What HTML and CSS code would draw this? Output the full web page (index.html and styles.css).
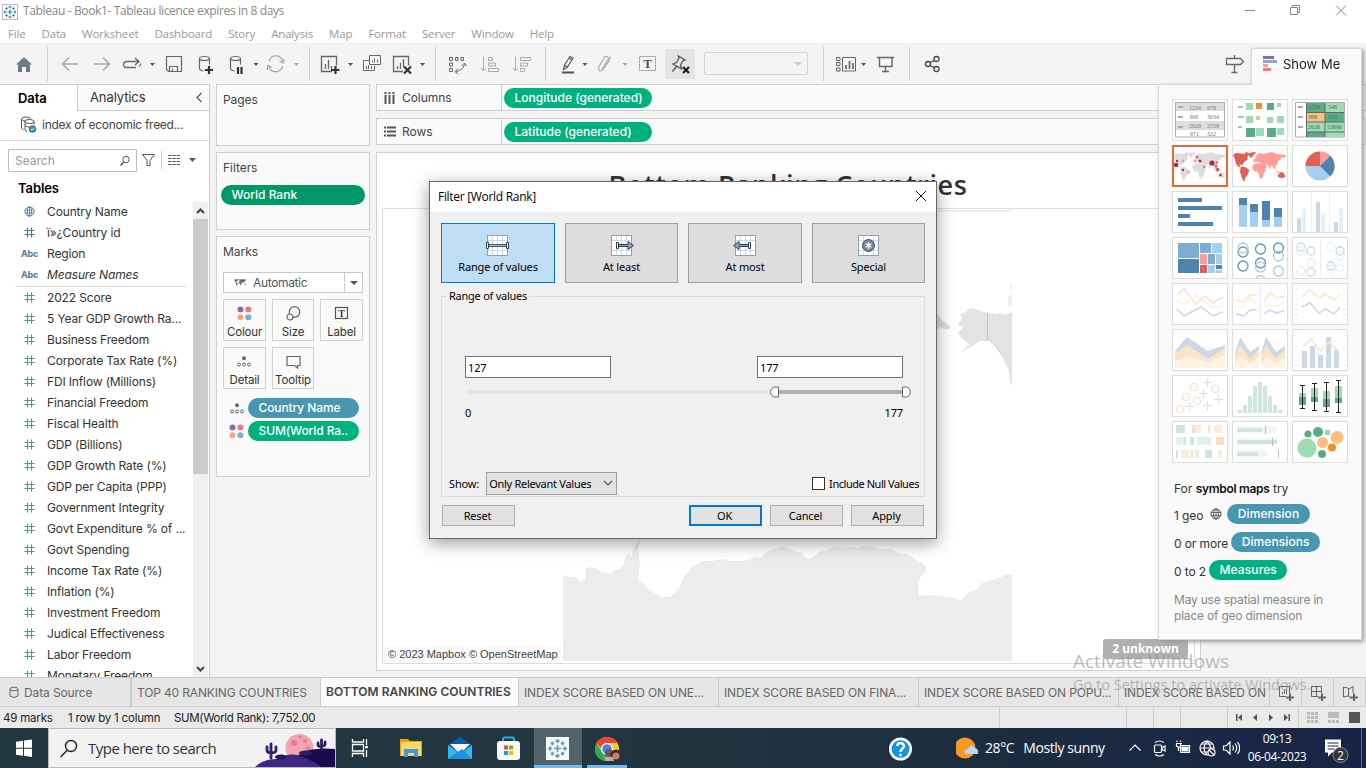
FILE: index.html
```html
<!DOCTYPE html>
<html lang="en">
<head>
<meta charset="utf-8">
<title>Tableau - Book1</title>
<link rel="stylesheet" href="styles.css">
</head>
<body>
<svg class="defs" width="0" height="0">
  <symbol id="hash" viewBox="0 0 11 11"><path d="M3.5 .5v10M7.500 .5v10M.5 3.500h10M.5 7.500h10" fill="none" stroke="currentColor" stroke-width="1.100"/></symbol>
  <symbol id="globe" viewBox="0 0 12 12"><g fill="none" stroke="currentColor"><circle cx="6" cy="6" r="5"/><ellipse cx="6" cy="6" rx="2.300" ry="5"/><path d="M1 4.500h10M1 7.500h10M6 1v10" stroke-width=".8"/></g></symbol>
  <symbol id="dots4" viewBox="0 0 15 15"><circle cx="3.500" cy="3.500" r="3" fill="#8a7099"/><circle cx="11.300" cy="3.500" r="3" fill="#fa7183"/><circle cx="3.500" cy="11.300" r="3" fill="#f3a97c"/><circle cx="11.300" cy="11.300" r="3" fill="#85a9d0"/></symbol>
  <symbol id="detail" viewBox="0 0 14 11"><circle cx="7" cy="2.200" r="2" fill="#666"/><g fill="none" stroke="#666"><circle cx="2" cy="8.500" r="1.500"/><circle cx="7" cy="8.500" r="1.500"/><circle cx="12" cy="8.500" r="1.500"/></g></symbol>
  <symbol id="tab" viewBox="0 0 16 16"><g stroke="currentColor" stroke-width="1.300"><path d="M8 5v6M5 8h6M8 0v3.500M6.200 1.800h3.600M8 12.500V16M6.200 14.200h3.600M0 8h3.500M1.800 6.200v3.600M12.500 8H16M14.200 6.200v3.600M3.700 2.200v3M2.200 3.700h3M12.300 2.200v3M10.800 3.700h3M3.700 10.800v3M2.200 12.300h3M12.300 10.800v3M10.800 12.300h3"/></g></symbol>
  <symbol id="world" viewBox="0 0 56 42"><g fill="currentColor"><path d="M1 10 4 8 12 9 14 7 18 9 15 12 16 14 12 17 10 20 7 19 9 22 7 22 4 19 3 14zM17 8 24 7 21 11 18 13zM9 22 13 22 17 25 16 29 13 33 12 37 10 33 8 26zM21 17 22 14 25 13 23 12 27 8 31 9 36 8 40 7 44 9 54 10 53 13 50 12 48 15 46 16 45 20 43 21 44 25 41 22 39 20 38 25 36 20 33 19 35 21 33 24 30 19 27 17zM22 19 27 18 31 20 34 25 32 28 31 32 28 34 26 27 22 26 20 22zM46 30 49 27 52 28 53 32 50 33 46 32zM43 25 49 28 46 28z"/></g></symbol>
</svg>

<header class="titlebar">
  <svg class="app-icon" width="16" height="16"><rect x=".5" y=".5" width="15" height="15" fill="#fff" stroke="#bbb"/><use href="#tab" x="1.500" y="1.500" width="13" height="13" color="#2b7fa8"/></svg>
  <span class="app-title">Tableau - Book1- Tableau licence expires in 8 days</span>
  <svg width="136" height="23" viewBox="1230 0 136 23" fill="none" stroke="#888"><path d="M1245 10.500h10M1290.500 7.500h7v7h-7zM1292.500 7v-1.500h7v7h-1.500M1336 5.500l10 10M1346 5.500l-10 10"/></svg>
</header>
<nav class="menubar"><span>File</span><span>Data</span><span>Worksheet</span><span>Dashboard</span><span>Story</span><span>Analysis</span><span>Map</span><span>Format</span><span>Server</span><span>Window</span><span>Help</span></nav>

<div class="toolbar">
  <svg width="310" height="41" viewBox="0 43 310 41" fill="none" stroke="#666">
    <path d="M16 64.500 24 57l8 7.500h-2V72h-4v-5h-4v5h-4v-7.500z" fill="#6c7a89" stroke="none"/>
    <path d="M47.500 47v34M309.500 47v34" stroke="#ccc"/>
    <path d="M78 64H63M69 57.500 62.500 64l6.500 6.500M94 64h15M103 57.500l6.500 6.500-6.500 6.500" stroke="#aaa" stroke-width="1.600"/>
    <path d="M136 67.500h-9q-3.500 0-3.500-3t3.500-3h11M135 58l4 3.500-4 3.500M139 66.500q2-1 1.500-3" stroke-width="1.300"/>
    <path d="M150 63h5l-2.500 3zM253.500 63h5l-2.500 3z" fill="#555" stroke="none"/><path d="M294 63h5l-2.500 3z" fill="#aaa" stroke="none"/>
    <path d="M166.500 56.500h15v15h-13l-2-2zM169.500 71v-4.500h8V71M172.500 68.500v3" stroke-width="1.200"/>
    <g stroke-width="1.200"><ellipse cx="204.500" cy="58.500" rx="5" ry="2"/><path d="M199.500 58.500v10.500q1.500 2 4 2M209.500 58.500v6"/><ellipse cx="235.500" cy="58.500" rx="5" ry="2"/><path d="M230.500 58.500v10.500q1.500 2 4 2M240.500 58.500v6"/></g>
    <path d="M205 70h8M209 66v8M238 67v7M241.500 67v7" stroke="#333" stroke-width="2.200"/>
    <path d="M269 61a7 7 0 0 1 13.500 0M282.500 66a7 7 0 0 1-13.500 1M284 59l-1 4-3.500-2M267 70l1-4.500 4 2" stroke="#aaa" stroke-width="1.300"/>
  </svg>
  <svg width="236" height="41" viewBox="310 43 236 41" fill="none" stroke="#666">
    <path d="M332 71.500h-10.500v-15h15v9M325.500 69v-5M328.500 69v-9M331.500 69v-3" stroke-width="1.300"/><path d="M331 70h8.500M335.500 66v8" stroke="#333" stroke-width="2.200"/>
    <path d="M348 63h5l-2.500 3zM420 63h5l-2.500 3z" fill="#555" stroke="none"/>
    <path d="M369.500 55.500h11v9h-11zM369 60.500h-5.500v10h11V66M366.500 69v-3M368.500 69v-4M371.500 69v-3M372.500 62.500v-2M374.500 62.500v-4M377.500 62.500v-3"/>
    <path d="M403 71.500h-9.500v-15h15v9M397.500 69v-3M400.500 69v-6M403.500 67v-8" stroke-width="1.300"/><path d="M404 66.500l7 7M411 66.500l-7 7" stroke="#333" stroke-width="2.200"/>
    <path d="M435.500 47v34M545.500 47v34" stroke="#ccc"/>
    <path d="M449.500 57.500h3v3h-3zM455.500 57.500h2.500v3h-2.500zM461 57.500h2.500v3H461zM449.500 63h3v3h-3zM449.500 68.500h3v3h-3zM456 71.500q7-1 8.500-7M458 68.500l-3 3 3 2.500M461.500 66l3-3 2 3"/>
    <g stroke="#aaa"><path d="M483.500 57v13M481 68l2.500 3 2.500-3M488.500 57.500h4v3h-4zM488.500 63h7v3h-7zM488.500 68.500h10v3h-10zM515.500 57v13M513 68l2.500 3 2.500-3M520.500 57.500h10v3h-10zM520.500 63h7v3h-7zM520.500 68.500h4v3h-4z"/></g>
  </svg>
  <svg width="158" height="41" viewBox="546 43 158 41" fill="none" stroke="#555">
    <path d="M562 72.500h12" stroke-width="2"/><path d="M563.500 69.500l1-4.500 5.500-8.500 3 1.500-5.500 9zM564.500 65l3 2M569 58l3 2" stroke-width="1.100"/>
    <path d="M582.500 63h5l-2.500 3z" fill="#555" stroke="none"/><path d="M622.500 63h5l-2.500 3z" fill="#aaa" stroke="none"/>
    <path d="M602 69l6-9q1-3-1-3.500-2-.5-3 1.500l-5 8.500q-1 4 1.500 4.500 2 0 3-2l5-7.500q2-3 1.500-5" stroke="#aaa" stroke-width="1.200"/>
    <rect x="639.500" y="56.500" width="16" height="14" stroke="#888" stroke-dasharray="2 1"/><text class="tool-t" x="647.500" y="68" text-anchor="middle" fill="#555" stroke="none">T</text>
    <rect x="665" y="49" width="30" height="30" fill="#e4e4e4" stroke="none"/>
    <path d="M678.500 56l6.500 4-2 .5-2.500 4.500 1 4-8.500-5 3.500-1.500 2.500-4.500zM676.500 66.500l-4 5" stroke-width="1.300"/><path d="M683 67l6 6M689 67l-6 6" stroke="#222" stroke-width="2.300"/>
  </svg>
  <div class="fit-select"><span></span></div>
  <svg width="437" height="41" viewBox="809 43 437 41" fill="none" stroke="#666">
    <path d="M823.500 47v34M909.500 47v34" stroke="#ccc"/>
    <path d="M836.500 57.500h3.500v3h-3.500zM836.500 62.500h3.500v3h-3.500zM836.500 68h3.500v3h-3.500zM842.500 57.500h13v13.500h-13z"/><path d="M846 69v-4M849.500 69v-8M853 69v-6" stroke-width="1.700"/>
    <path d="M861 63h5l-2.500 3z" fill="#555" stroke="none"/><path d="M877 57.500h17M879.500 58v8.500h12.500V58M885.500 66v5.500M882 71.500h7" stroke-width="1.400"/>
    <g stroke="#444" stroke-width="1.300"><circle cx="928" cy="64" r="2.500"/><circle cx="936.500" cy="59" r="2.500"/><circle cx="936.500" cy="69" r="2.500"/><path d="M930 62.700l4.500-2.500M930 65.500l4.500 2.500"/></g>
    <path d="M1226.500 58.500h14l3 3-3 3h-14zM1234.500 55v3M1234.500 65v7M1231.500 72.500h6" stroke-width="1.300"/>
  </svg>
</div>

<main class="workspace">
  <aside class="data-pane">
    <div class="pane-tabs"><div class="pane-tab active">Data</div><div class="pane-tab">Analytics<svg width="8" height="11" fill="none" stroke="#555" stroke-width="1.200"><path d="M6.500 1 2 5.500 6.500 10"/></svg></div></div>
    <div class="source-row">
      <svg width="18" height="18" fill="none" stroke="#555"><path d="M1.500 3v9l2 2M1.500 3q0-2 4.500-2t4.500 2M1.500 3q1 2 3.500 2"/><ellipse cx="9.500" cy="5.500" rx="4.500" ry="2"/><path d="M5 5.500V14l2 2M14 5.500v3M5 9.500q2 2 5 1.500"/><circle cx="12.500" cy="13" r="3.800" fill="#3a86a8" stroke="none"/><path d="M10.800 13l1.300 1.300 2.300-2.500" stroke="#fff"/></svg>
      <span>index of economic freed...</span>
    </div>
    <div class="search-row">
      <div class="search-box"><span>Search</span><svg width="12" height="12" fill="none" stroke="#555"><circle cx="7" cy="4.500" r="3.200"/><path d="M4.800 7 1.500 10.500" stroke-width="1.500"/></svg></div>
      <svg width="60" height="24" viewBox="140 148 60 24" fill="none" stroke="#555"><path d="M142.500 154.500h12l-4.500 6v5h-3v-5z"/><path d="M161.500 151v18" stroke="#ccc"/><path d="M168 155.500h12M168 158.500h12M168 161.500h12M168 164.500h12" stroke-dasharray="3.400 .9"/><path d="M189 158h7l-3.500 4z" fill="#555" stroke="none"/></svg>
    </div>
    <div class="tables-title">Tables</div>
    <div class="field-area">
      <div class="fields">
        <div class="field dim"><svg width="12" height="12"><use href="#globe"/></svg>Country Name</div>
        <div class="field dim"><svg width="11" height="11"><use href="#hash"/></svg>ï»¿Country id</div>
        <div class="field dim"><b>Abc</b>Region</div>
        <div class="field dim"><b>Abc</b><i>Measure Names</i></div>
        <hr>
        <div class="field"><svg width="11" height="11"><use href="#hash"/></svg>2022 Score</div>
        <div class="field"><svg width="11" height="11"><use href="#hash"/></svg>5 Year GDP Growth Ra...</div>
        <div class="field"><svg width="11" height="11"><use href="#hash"/></svg>Business Freedom</div>
        <div class="field"><svg width="11" height="11"><use href="#hash"/></svg>Corporate Tax Rate (%)</div>
        <div class="field"><svg width="11" height="11"><use href="#hash"/></svg>FDI Inflow (Millions)</div>
        <div class="field"><svg width="11" height="11"><use href="#hash"/></svg>Financial Freedom</div>
        <div class="field"><svg width="11" height="11"><use href="#hash"/></svg>Fiscal Health</div>
        <div class="field"><svg width="11" height="11"><use href="#hash"/></svg>GDP (Billions)</div>
        <div class="field"><svg width="11" height="11"><use href="#hash"/></svg>GDP Growth Rate (%)</div>
        <div class="field"><svg width="11" height="11"><use href="#hash"/></svg>GDP per Capita (PPP)</div>
        <div class="field"><svg width="11" height="11"><use href="#hash"/></svg>Government Integrity</div>
        <div class="field"><svg width="11" height="11"><use href="#hash"/></svg>Govt Expenditure % of ...</div>
        <div class="field"><svg width="11" height="11"><use href="#hash"/></svg>Govt Spending</div>
        <div class="field"><svg width="11" height="11"><use href="#hash"/></svg>Income Tax Rate (%)</div>
        <div class="field"><svg width="11" height="11"><use href="#hash"/></svg>Inflation (%)</div>
        <div class="field"><svg width="11" height="11"><use href="#hash"/></svg>Investment Freedom</div>
        <div class="field"><svg width="11" height="11"><use href="#hash"/></svg>Judical Effectiveness</div>
        <div class="field"><svg width="11" height="11"><use href="#hash"/></svg>Labor Freedom</div>
        <div class="field"><svg width="11" height="11"><use href="#hash"/></svg>Monetary Freedom</div>
      </div>
      <div class="scroll">
        <svg width="15" height="17" fill="none" stroke="#444" stroke-width="2"><path d="M4 11l3.500-3.500L11 11"/></svg>
        <div class="scroll-thumb"></div>
        <svg class="scroll-down" width="15" height="17" fill="none" stroke="#444" stroke-width="2"><path d="M4 7l3.500 3.500L11 7"/></svg>
      </div>
    </div>
  </aside>

  <section class="cards">
    <div class="card pages"><h3>Pages</h3></div>
    <div class="card filters"><h3>Filters</h3><div class="pill dark">World Rank</div></div>
    <div class="card marks"><h3>Marks</h3>
      <div class="mark-type"><svg width="13" height="10" viewBox="0 6 36 28" color="#666"><use href="#world" width="36" height="36" /></svg><span>Automatic</span><em></em></div>
      <div class="mark-grid">
        <div><svg width="15" height="15"><use href="#dots4"/></svg>Colour</div>
        <div><svg width="15" height="15" fill="none" stroke="#666" stroke-width="1.200"><circle cx="8.500" cy="6" r="5.300"/><circle cx="4" cy="11" r="3" fill="#fafafa"/></svg>Size</div>
        <div><svg width="15" height="15" fill="none" stroke="#555"><rect x="1.500" y="1.500" width="12" height="11" stroke-width="1.200"/><text class="tool-t small" x="7.500" y="10.500" text-anchor="middle" fill="#444" stroke="none">T</text></svg>Label</div>
        <div><svg width="15" height="15"><use href="#detail" width="14" height="11" y="2"/></svg>Detail</div>
        <div><svg width="15" height="15" fill="none" stroke="#666" stroke-width="1.200"><path d="M1 2.500h13v9h-2.500V14l-3-2.500H1z"/></svg>Tooltip</div>
      </div>
      <div class="mark-row"><svg width="16" height="15"><use href="#detail" width="14" height="11" x="1" y="2"/></svg><div class="pill blue">Country Name</div></div>
      <div class="mark-row"><svg width="16" height="15"><use href="#dots4" width="15" height="15"/></svg><div class="pill">SUM(World Ra..</div></div>
    </div>
  </section>

  <section class="sheet">
    <div class="shelf"><div class="shelf-name"><svg width="12" height="12"><path d="M1.500 0v2M5.500 0v2M9.500 0v2M1.500 3v9M5.500 3v9M9.500 3v9" stroke="#555" stroke-width="2"/></svg>Columns</div><div class="pill">Longitude (generated)</div></div>
    <div class="shelf"><div class="shelf-name"><svg width="12" height="12"><path d="M0 1.500h2M0 5.500h2M0 9.500h2M3 1.500h9M3 5.500h9M3 9.500h9" stroke="#555" stroke-width="1.800"/></svg>Rows</div><div class="pill">Latitude (generated)</div></div>
    <div class="view">
      <h1>Bottom Ranking Countries</h1>
      <div class="map">
        <svg width="811" height="454" viewBox="383 209 811 454">
          <path d="M563 575 571 577 576 577 580 582 583 580 585 581 586 569 590 567 597 568 600 571 604 573 611 574 614 570 621 568 624 565 625 558 629 553 631 558 633 550 635 546 638 542 641 540 638 547 640 563 638 580 644 584 649 590 655 593 661 597 670 597 675 593 679 588 682 582 684 577 688 573 689 569 694 566 703 561 712 561 723 559 730 561 741 561 748 560 755 557 760 558 765 553 770 550 778 548 781 546 788 548 794 551 800 552 805 557 809 559 814 556 820 551 827 551 834 546 841 548 850 547 858 548 862 546 872 547 882 549 892 549 898 553 907 554 915 559 920 562 926 566 926 571 921 576 918 585 919 596 931 595 947 597 954 598 960 601 966 596 969 592 977 590 982 583 991 580 999 578 1005 575 1012 574 1012 661 563 661z" fill="#ececec"/>
          <path d="M1012 312 1005 315 1000 313 996 314 988 313 981 311 976 309 970 308 966 312 960 314 962 319 958 325 963 327 958 333 961 337 966 342 970 344 961 352 971 347 980 341 988 341 995 344 999 350 1004 361 1009 370 1010 382 1012 386z" fill="#e3e3e3"/><path d="M987.500 313v28M991 341l5 5 5 8" fill="none" stroke="#c4c4c4"/><path d="M1012 282l-2 5 2 4zM1008 298l4-6v15l-4-2z" fill="#eee"/>
          <path d="M936 313l7 8 8 6-4 3-7-3-4 4z" fill="#ddd"/><path d="M1012 210H563v1.500h449z" fill="#ececec"/>
        </svg>
        <span class="credit">© 2023 Mapbox © OpenStreetMap</span>
        <span class="unknown">2 unknown</span>
      </div>
    </div>
  </section>
</main>

<div class="sheet-tabs">
  <div class="src"><svg width="10" height="13" fill="none" stroke="#666"><ellipse cx="5" cy="3" rx="4" ry="1.800"/><path d="M1 3v7q4 3 8 0V3"/></svg>Data Source</div>
  <div class="t40">TOP 40 RANKING COUNTRIES</div>
  <div class="current">BOTTOM RANKING COUNTRIES</div>
  <div class="idx">INDEX SCORE BASED ON UNE...</div>
  <div class="idx">INDEX SCORE BASED ON FINA...</div>
  <div class="idx">INDEX SCORE BASED ON POPU...</div>
  <div class="idx last">INDEX SCORE BASED ON</div>
  <div class="add"><svg width="16" height="16" fill="none" stroke="#666"><path d="M8 11.500H1.500v-10h10v7M4.500 9V7M6.500 9V5M8.500 9V4"/><path d="M8 12.500h8M12 8.500v8" stroke-width="2"/></svg></div>
  <div class="add"><svg width="16" height="16" fill="none" stroke="#666"><path d="M8 11.500H1.500v-10h10v7M1 6.500h11M6.500 1v10"/><path d="M8 12.500h8M12 8.500v8" stroke-width="2"/></svg></div>
  <div class="add"><svg width="16" height="16" fill="none" stroke="#666"><path d="M8 12l-2-1-4.500 1V2l4 1 1.500 1 4-2.500V8M6.500 3.500V11"/><path d="M8 12.500h8M12 8.500v8" stroke-width="2"/></svg></div>
</div>

<footer class="status">
  <span class="s1">49 marks</span><span class="s2">1 row by 1 column</span><span class="s3">SUM(World Rank): 7,752.00</span>
  <svg width="367" height="20" viewBox="999 708 367 20"><path d="M999.500 708v20M1126.500 708v20M1153.500 708v20M1180.500 708v20M1227.500 708v20M1298.500 708v20" stroke="#ccc"/><g fill="#555"><path d="M1236 714h1.500v7h-1.500zM1242 714v7l-4-3.500zM1257 714v7l-4-3.500zM1269 714v7l4-3.500zM1284 714v7l4-3.500zM1288.500 714h1.500v7h-1.500z"/><path d="M1349 712h11v11h-11z"/></g><g fill="none" stroke="#bbb"><path d="M1307 713.500h11M1307 717.500h11M1307 721.500h11" stroke-width="3" stroke-dasharray="3 1"/><path d="M1328 715h11" stroke-width="6"/><path d="M1328 721.500h11" stroke-width="3" stroke-dasharray="3 1"/></g></svg>
</footer>

<div class="taskbar">
  <svg width="48" height="40"><path d="M16 13.700l7-1v7h-7zM24 12.500l8-1v8.200h-8zM16 20.700h7v7l-7-1zM24 20.700h8V29l-8-1.200z" fill="#fff"/></svg>
  <div class="win-search">
    <svg width="39" height="38" fill="none" stroke="#222" stroke-width="1.400"><circle cx="22" cy="17" r="5.500"/><path d="M18 21.500 11.500 28"/></svg>
    <span>Type here to search</span>
    <svg class="scene" width="80" height="38" viewBox="256 729 80 38"><circle cx="300.500" cy="748" r="14" fill="#f3a3b2"/><g fill="#dc7f91"><circle cx="295" cy="743" r="3"/><circle cx="306" cy="741" r="2"/><circle cx="309" cy="749" r="2.500"/><circle cx="301" cy="737" r="1.500"/></g><path d="M294 760q12-14 42-11v18h-42z" fill="#1a0a4c"/><path d="M256 767q8-8 22-8 10-6 20-4 14 4 24 12z" fill="#3d2782"/><g stroke="#332064" stroke-width="2.800" fill="none" stroke-linecap="round"><path d="M272 744v14M268 747v3q0 3 4 3M277 747v3q0 3-5 3M322.500 740v9M319 743v2q0 1.500 3.500 1.500M326 742v2.500q0 1.500-3.500 1.500" /></g><ellipse cx="282" cy="757" rx="6" ry="2.500" fill="#2b1766"/><ellipse cx="307" cy="753" rx="7" ry="2.500" fill="#2b1766"/></svg>
  </div>
  <svg class="apps" width="620" height="40" viewBox="336 728 620 40">
    <g fill="none" stroke="#fff" stroke-width="1.300"><path d="M352.500 739v3h11v-3M352.500 757v-3.500h11v3.500M352.500 744.500h11v6.500h-11zM366.500 739v6M366.500 750v7"/></g><circle cx="366.500" cy="747" r="1.500" fill="#fff"/>
    <path d="M400 739h8l2 2h12v15h-22z" fill="#e6a413"/><path d="M401 742h20v14h-20z" fill="#ffd766"/><path d="M404 757v-8h14v8h-4v-4h-6v4z" fill="#3b9ae3"/>
    <path d="M448 745l12-8 12 8v14h-24z" fill="#0c5ba9"/><path d="M450 744h20l-10 10z" fill="#f5f8ff"/><path d="M448 745l12 9 12-9v14h-24z" fill="#35b7f2"/><path d="M448 759l14-10 10 10z" fill="#1e90df"/>
    <path d="M503 742v-3q0-1.500 2-1.500h7q2 0 2 1.500v3" fill="none" stroke="#24b0e6" stroke-width="2"/><rect x="497" y="741" width="23" height="19" rx="3" fill="#f8f8f8"/><path d="M504 745.500h4v4h-4z" fill="#f25022"/><path d="M509 745.500h4v4h-4z" fill="#7fba00"/><path d="M504 751h4v4h-4z" fill="#00a4ef"/><path d="M509 751h4v4h-4z" fill="#ffb900"/>
    <path d="M534 728h48v40h-48z" fill="#52646a"/><path d="M534 765h48v3h-48zM587 765h40v3h-40z" fill="#76b9ed"/><rect x="546" y="737" width="23" height="23" fill="#f7f7f7"/><use href="#tab" x="548" y="739" width="19" height="19" color="#5c9ac0"/>
    <circle cx="607" cy="749" r="12" fill="#fcc934"/><path d="M596.600 743A12 12 0 0 1 617.400 743L607 743A6 6 0 0 0 601 748z" fill="#ea4335"/><path d="M596.600 743A12 12 0 0 0 607 761L611 753 602 752z" fill="#34a853"/><circle cx="607" cy="749" r="6" fill="#fff"/><circle cx="607" cy="749" r="4.800" fill="#4285f4"/><circle cx="609" cy="753" r="4" fill="#76524c"/><circle cx="616" cy="755" r="5.500" fill="#382b2a"/><circle cx="616" cy="756" r="3.500" fill="#b98468"/><path d="M604 757h9l1 4h-8z" fill="#c8a7ae"/>
    <circle cx="900.500" cy="749" r="11.500" fill="#fff"/><circle cx="900.500" cy="749" r="9" fill="#1593db"/><path d="M897 746q.5-3 3.500-3t3.500 3q0 2-2 3-1.500 1-1.500 3" fill="none" stroke="#fff" stroke-width="2.400"/><circle cx="900.500" cy="755" r="1.500" fill="#fff"/>
  </svg>
  <div class="weather"><svg width="24" height="40"><circle cx="9" cy="20" r="10.500" fill="#f59b22"/><path d="M9 26q-2-5 3-5 3-6 7-1 4 1 3 6z" fill="#b8d4fa"/></svg><span class="temp">28°C</span><span class="sun">Mostly sunny</span></div>
  <svg width="116" height="40" viewBox="1124 728 116 40" fill="none" stroke="#fff" stroke-width="1.200"><path d="M1129.500 750.500l5.500-5.500 5.500 5.500M1155 742.500q4.500-3 9 0M1155 754.500q4.500 3 9 0"/><rect x="1154.500" y="745" width="7" height="7.500" rx="1"/><path d="M1162 747.500l3-1.500v5l-3-1.500zM1180.500 745.500h9v7h-9zM1176 743.500h6M1177 742v-1.500M1180.500 742v-1.500M1176.500 744v2q2.500 2.500 4 0v-2M1178.500 747v4"/><path d="M1182 747h6v4h-6z" fill="#fff"/><circle cx="1207" cy="748" r="7"/><path d="M1200 748h14M1201.500 744h11M1201.500 752h8M1207 741q-6 7 0 14M1207 741q5 6 3 10"/><circle cx="1211.500" cy="752.500" r="3.500" fill="#1b2944"/><path d="M1209 750l5 5M1223.500 746h2.500l4-4v12l-4-4h-2.500zM1232.500 745.500q2 2.500 0 5M1235 743.500q3.500 4.500 0 9M1237.500 742q4.500 6 0 12"/></svg>
  <div class="clock"><span>09:13</span><span>06-04-2023</span></div>
  <svg width="54" height="40" viewBox="1312 728 54 40"><path d="M1325 739.500h16v13h-9l-4 4v-4h-3z" fill="#fff"/><path d="M1327.500 743h11M1327.500 746h11M1327.500 749h7" stroke="#1b2944"/><circle cx="1340.500" cy="755" r="7.500" fill="#32373f" stroke="#888"/><text class="badge" x="1340.500" y="759.500" text-anchor="middle" fill="#fff">2</text><path d="M1361.500 728v40" stroke="#66708a"/></svg>
</div>

<aside class="showme">
  <div class="showme-tab"><svg width="15" height="16"><path d="M0 0h11v3H0z" fill="#8a7099"/><path d="M0 4h14v3H0z" fill="#85a9d0"/><path d="M0 8h5v3H0z" fill="#f3a97c"/><path d="M0 12h8v3H0z" fill="#fa7183"/></svg>Show Me</div>
  <div class="showme-body">
    <div class="thumbs">
      <svg viewBox="0 0 56 42"><path d="M3 3h50v35H3z" fill="#fff"/><path d="M3 3h50v9H3zM3 22h50v9H3z" fill="#ddd"/><path d="M3.500 3.500h49v34.500h-49z" fill="none" stroke="#aaa"/><path d="M6 8h5M6 18h5M6 28h5" stroke="#aaa" stroke-width="2"/><g class="tiny" fill="#777"><text x="17" y="10.500">1234</text><text x="35" y="10.500">678</text><text x="17" y="20">368</text><text x="35" y="20">3034</text><text x="17" y="29">2620</text><text x="35" y="29">2559</text><text x="18" y="37">971</text><text x="35" y="37">322</text></g></svg>
      <svg viewBox="0 0 56 42"><path d="M6 8h5M6 18h6M6 28h4" stroke="#bbb" stroke-width="2"/><path d="M14 4h7v7h-7zM14 17h7v7h-7zM35 18h6v6h-6zM45 17h7v7h-7zM24 29h8v8h-8zM45 29h7v7h-7zM45 4h4v4h-4z" fill="#9edab4"/><path d="M35 4h7v7h-7zM14 29h9v9h-9zM35 29h9v9h-9z" fill="#58ac88"/><path d="M24 4h6v6h-6z" fill="#f28e2b"/><path d="M24 17h4v4h-4z" fill="#ffbe7d"/></svg>
      <svg viewBox="0 0 56 42"><path d="M3.500 3.500h49v34.500h-49z" fill="#fff" stroke="#aaa"/><path d="M14 4h38v34H14z" fill="#9edab4"/><path d="M14 4h19v9H14zM33 13h19v10H33zM14 33h19v5H14z" fill="#58ac88"/><path d="M14 13h19v10H14z" fill="#ffbe7d"/><path d="M14.500 4v34M33 4v34M14 13.500h38M14 23h38M14 33h38" stroke="#666"/><path d="M6 8h5M6 18h5M6 28h5" stroke="#aaa" stroke-width="2"/><g class="tiny" fill="#486c59"><text x="16" y="10">1234</text><text x="36" y="10">546</text><text x="16" y="20">368</text><text x="36" y="20">310</text><text x="16" y="30">2620</text><text x="35" y="30">53890</text></g></svg>
      <svg class="selected" viewBox="0 0 56 42" color="#ddd"><use href="#world"/><g fill="#b8233f"><circle cx="4" cy="20" r="2.200"/><circle cx="5" cy="16" r="1.200"/><circle cx="11" cy="25" r="1.200"/><circle cx="28" cy="16" r="1.500"/><circle cx="40" cy="18" r="2.600"/><circle cx="48.500" cy="30" r="1.200"/></g><g fill="#e15f55"><circle cx="25" cy="12" r="1.500"/><circle cx="32" cy="22" r="1"/><circle cx="44" cy="21" r="1.500"/><circle cx="45.500" cy="24.500" r="2"/><circle cx="45" cy="17.500" r="1.200"/></g><g fill="#ff9d9a"><circle cx="11" cy="16" r="1.500"/><circle cx="23" cy="16" r="1.500"/><circle cx="16.500" cy="27" r="1.600"/></g></svg>
      <svg viewBox="0 0 56 42" color="#ff9d9a"><use href="#world"/><path d="M1 10 4 8 12 9 14 7 18 9 15 12 16 14 12 17 10 20 7 19 9 22 7 22 4 19 3 14zM17 8 24 7 21 11 18 13zM9 22 13 22 17 25 16 29 13 33 12 37 10 33 8 26zM46 30 49 27 52 28 53 32 50 33 46 32z" fill="#e15f55"/></svg>
      <svg viewBox="0 0 56 42"><circle cx="28" cy="21" r="14.500" fill="#a5cff0"/><path d="M28 21V6.500A14.500 14.500 0 0 0 13.500 21z" fill="#e15f55"/><path d="M28 21V6.500A14.500 14.500 0 0 1 38.300 10.700z" fill="#ff9d9a"/><path d="M28 21 38.300 10.700A14.500 14.500 0 0 1 38.300 31.300z" fill="#4f82ac"/></svg>
      <svg viewBox="0 0 56 42"><path d="M6 7h24v4H6zM6 15h44v4H6zM6 23h12v4H6zM6 31h35v4H6z" fill="#4f82ac"/></svg>
      <svg viewBox="0 0 56 42"><path d="M7 7h8v29H7zM18 13h8v23h-8zM30 10h8v26h-8zM42 17h8v19h-8z" fill="#a5cff0"/><path d="M7 7h8v7H7zM18 13h8v8h-8zM30 10h8v19h-8zM42 17h8v9h-8z" fill="#4f82ac"/></svg>
      <svg viewBox="0 0 56 42"><path d="M19.500 1v40M37.500 1v40" stroke="#eee"/><path d="M5 27h4v14H5zM24 11h4v30h-4zM42 31h4v10h-4z" fill="#cbd9e6"/><path d="M10 18h4v23h-4zM29 22h4v19h-4zM47 17h4v24h-4z" fill="#e2f0fb"/></svg>
      <svg viewBox="0 0 56 42"><path d="M6 6h21v15H6zM28 6h11v10H28zM36 17h7v10h-7z" fill="#7eadd3"/><path d="M40 6h10v10H40zM44 17h6v10h-6zM36 28h7v8h-7zM44 33h6v3h-6z" fill="#a5cff0"/><path d="M6 22h21v14H6zM44 28h6v4h-6z" fill="#4f82ac"/><path d="M28 17h7v10h-7z" fill="#ff9d9a"/><path d="M28 28h7v8h-7z" fill="#e15f55"/></svg>
      <svg viewBox="0 0 56 42" fill="none" stroke-width="1.300"><g stroke="#5f96be"><circle cx="11" cy="15" r="5"/><circle cx="11" cy="29" r="5"/><circle cx="28.500" cy="12" r="5"/><circle cx="28.500" cy="26" r="5"/><circle cx="46.500" cy="11" r="5"/></g><g stroke="#a5cff0"><circle cx="11" cy="11" r="5"/><circle cx="28.500" cy="30" r="5"/><path d="M24 41q4-5 9 0"/><circle cx="46.500" cy="19" r="5"/><circle cx="46.500" cy="34" r="5"/></g></svg>
      <svg viewBox="0 0 56 42" fill="none" stroke-width="1.300"><path d="M28.500 1v40" stroke="#eee"/><g stroke="#cbd9e6"><circle cx="9" cy="10" r="4"/><circle cx="19" cy="14" r="4"/><circle cx="19" cy="35" r="4"/><circle cx="48" cy="14" r="4"/><circle cx="39" cy="29" r="4"/></g><g stroke="#e2f0fb"><circle cx="9" cy="14" r="4"/><circle cx="9" cy="34" r="4"/><circle cx="19" cy="26" r="4"/><circle cx="39" cy="10" r="4"/><circle cx="48" cy="19" r="4"/><circle cx="48" cy="31" r="4"/><circle cx="39" cy="32" r="4"/></g></svg>
      <svg viewBox="0 0 56 42" fill="none" stroke-width="1.500"><path d="M5 12l7-6 12 15 9-8 8 7 10-6" stroke="#fde3c8"/><path d="M5 18l7 3 12-9 17 13 10-2" stroke="#fff1d8"/><path d="M5 26l7 7 17-9 12 9 10-4" stroke="#cbd9e6"/></svg>
      <svg viewBox="0 0 56 42" fill="none" stroke-width="1.500"><path d="M28.500 1v40" stroke="#eee"/><path d="M4 17l8 2 6-7h7M32 18l6-8 6 5 8-2" stroke="#fde3c8"/><path d="M4 24l7-1 7-8 7 5M32 24l6-2 6 2 8-5" stroke="#fff1d8"/><path d="M4 31l8 2 6-6h7M32 31l6-4 6 3 8-2" stroke="#cbd9e6"/></svg>
      <svg viewBox="0 0 56 42" fill="none" stroke-width="1.500"><path d="M4 6v33M52.500 6v33" stroke="#eee" stroke-width="3" stroke-dasharray="1 4"/><path d="M10 14l8-7 9 8 6-4 9 6 6-5" stroke="#fde3c8"/><path d="M10 24l8-4 9 10 6-4 9 5 6-7" stroke="#cbd9e6"/></svg>
      <svg viewBox="0 0 56 42"><path d="M3 22 15 8l21 14 17-6v23H3z" fill="#cbd9e6"/><path d="M3 24l12-8 21 14 17-11v20H3z" fill="#fde3c8"/><path d="M3 33l12-6 21 6 17-7v13H3z" fill="#fff3e5"/></svg>
      <svg viewBox="0 0 56 42"><path d="M3 24l5-16 10 15 9-6v22H3zM29 24l5-16 10 15 9-6v22H29z" fill="#cbd9e6"/><path d="M3 26l5-10 10 14 9-10v19H3zM29 26l5-10 10 14 9-10v19H29z" fill="#fde3c8"/><path d="M3 34l5-6 10 6 9-6v11H3zM29 34l5-6 10 6 9-6v11H29z" fill="#fff3e5"/></svg>
      <svg viewBox="0 0 56 42"><path d="M4 6v33M52.500 6v33" stroke="#eee" stroke-width="3" stroke-dasharray="1 4"/><path d="M10 22h5v17h-5zM18 17h5v22h-5zM26 26h5v13h-5zM34 8h5v31h-5zM42 21h5v18h-5z" fill="#cbd9e6"/><path d="M11 18l8-8 9 12 9-9 9 9" fill="none" stroke="#fde3c8" stroke-width="1.500"/></svg>
      <svg viewBox="0 0 56 42" fill="none"><g stroke="#fde3c8" stroke-width="1.400"><circle cx="22" cy="12" r="3.600"/><circle cx="43" cy="14" r="3.600"/><circle cx="14" cy="22" r="3.600"/><circle cx="25" cy="26" r="3.600"/><circle cx="8" cy="34" r="3.600"/></g><path d="M31 7.500h9M35.500 3v9M27 18.500h9M31.500 14v9M42 24.500h9M46.500 20v9M31 30.500h9M35.500 26v9M13 31.500h9M17.500 27v9" stroke="#cde7da"/></svg>
      <svg viewBox="0 0 56 42"><path d="M6 35h4v3H6zM11 30h4v8h-4zM16 21h4v17h-4zM21 11h4v27h-4zM26 7h4v31h-4zM31 11h4v27h-4zM36 21h4v17h-4zM41 30h4v8h-4zM46 35h4v3h-4z" fill="#cde7da"/></svg>
      <svg viewBox="0 0 56 42"><path d="M7 18h7v4H7zM19 13h7v9h-7zM31 16h7v8h-7zM43 11h7v12h-7z" fill="#9edab4"/><path d="M7 22h7v8H7zM19 22h7v5h-7zM31 24h7v8h-7zM43 23h7v5h-7z" fill="#58ac88"/><path d="M10.500 10v24M8 10.500h5M8 33.500h5M22.500 8v28M20 8.500h5M20 35.500h5M34.500 7v30M32 7.500h5M32 36.500h5M46.500 5v33M44 5.500h5M44 37.500h5" stroke="#222" fill="none"/></svg>
      <svg viewBox="0 0 56 42"><path d="M4 4h9v8H4zM11 16h3v8h-3zM18 16h4v8h-4zM4 29h2v8H4zM33 29h7v8h-7z" fill="#cde7da"/><path d="M4 16h6v8H4zM25 16h14v8H25zM23 29h4v8h-4z" fill="#e1f3e8"/><path d="M20 4h4v8h-4zM36 4h2v8h-2zM44 16h8v8h-8zM19 29h2v8h-2z" fill="#fbdfc5"/><path d="M25 4h4v8h-4zM42 4h8v8h-8zM9 29h8v8H9zM46 29h4v8h-4z" fill="#fdebdb"/></svg>
      <svg viewBox="0 0 56 42"><path d="M5 5h40v7H5zM5 17h40v7H5zM5 29h30v7H5z" fill="#f5f5f5"/><path d="M5 7h25v4H5zM5 19h40v4H5zM5 31h21v4H5z" fill="#cde7da"/><path d="M33.500 5v8M40.500 17v8M46.500 29v8" stroke="#bbb"/></svg>
      <svg viewBox="0 0 56 42"><circle cx="15" cy="27" r="9.500" fill="#9edab4"/><circle cx="16" cy="13" r="3.600" fill="#58ac88"/><circle cx="26" cy="11" r="5" fill="#58ac88"/><circle cx="35.500" cy="11.500" r="3" fill="#9edab4"/><circle cx="45" cy="16.500" r="6.500" fill="#ffbe7d"/><circle cx="30.500" cy="21.500" r="5.500" fill="#ffbe7d"/><circle cx="40" cy="26.500" r="4" fill="#f28e2b"/><circle cx="30" cy="33" r="4" fill="#58ac88"/></svg>
    </div>
    <div class="hint">For <b>symbol maps</b> try</div>
    <div class="need"><span class="geo">1 geo</span><svg width="12" height="12" color="#555"><use href="#globe"/></svg><div class="pill blue">Dimension</div></div>
    <div class="need"><span>0 or more</span><div class="pill blue">Dimensions</div></div>
    <div class="need"><span>0 to 2</span><div class="pill">Measures</div></div>
    <p>May use spatial measure in<br>place of geo dimension</p>
  </div>
</aside>

<section class="dialog">
  <header>Filter [World Rank]<svg width="12" height="12" fill="none" stroke="#111"><path d="M1 1l10 10M11 1 1 11"/></svg></header>
  <div class="modes">
    <div class="mode on"><svg width="24" height="22"><g fill="none"><rect x="1.500" y=".5" width="20" height="20" fill="#fff" stroke="#8ea0b8"/><path d="M6.500 1v19M11.500 1v19M16.500 1v19M2 5.500h19M2 15.500h19" stroke="#cfd8e6"/><path d="M2 10.500h20" stroke="#3f5876" stroke-width="3"/><path d="M2 10.500h20" stroke="#9bbde0"/><path d="M.5 7.500h2v6h-2zM20.500 7.500h2v6h-2z" fill="#fff" stroke="#2b4058"/></g></svg>Range of values</div>
    <div class="mode"><svg width="24" height="22"><rect x="1.500" y=".5" width="20" height="20" fill="#fff" stroke="#8ea0b8"/><path d="M6.500 1v19M11.500 1v19M16.500 1v19M2 5.500h19M2 15.500h19" stroke="#cfd8e6"/><path d="M8 9.500h10v-3l5.500 4-5.500 4v-3H8z" fill="#85a7cc" stroke="#2b4058"/><path d="M6.500 7.500h2v6h-2z" fill="#fff" stroke="#2b4058"/></svg>At least</div>
    <div class="mode"><svg width="24" height="22"><rect x="2.500" y=".5" width="20" height="20" fill="#fff" stroke="#8ea0b8"/><path d="M7.500 1v19M12.500 1v19M17.500 1v19M3 5.500h19M3 15.500h19" stroke="#cfd8e6"/><path d="M16 9.500H6v-3L.5 10.500l5.500 4v-3h10z" fill="#85a7cc" stroke="#2b4058"/><path d="M15.500 7.500h2v6h-2z" fill="#fff" stroke="#2b4058"/></svg>At most</div>
    <div class="mode"><svg width="24" height="22"><rect x="1.500" y=".5" width="20" height="20" fill="#fff" stroke="#8ea0b8"/><path d="M6.500 1v19M16.500 1v19M2 5.500h19M2 15.500h19" stroke="#cfd8e6"/><circle cx="11.500" cy="10.500" r="6" fill="#73879f" stroke="#3d526b"/><path d="M11.500 7v7M8.500 8.700l6 3.600M14.500 8.700l-6 3.600" stroke="#fff" stroke-width="1.300"/></svg>Special</div>
  </div>
  <fieldset class="range">
    <legend>Range of values</legend>
    <div class="inputs"><div class="input">127</div><div class="input">177</div></div>
    <svg class="slider" width="448" height="12" viewBox="465 386 448 12"><path d="M466 390h310v4H466z" fill="#e5e5e5"/><path d="M778 390h126v4H778z" fill="#b0b0b0"/><path d="M778.500 387v10h-3.500q-4.500-1-4.500-5t4.500-5zM902.500 387v10h4q4-1 4-5t-4-5z" fill="#fff" stroke="#666"/></svg>
    <div class="limits"><span>0</span><span>177</span></div>
    <div class="show-row"><span>Show:</span><div class="combo">Only Relevant Values<svg width="10" height="7" fill="none" stroke="#555" stroke-width="1.200"><path d="M1 1l4 4 4-4"/></svg></div><div class="check"></div><span class="nulls">Include Null Values</span></div>
  </fieldset>
  <div class="buttons"><div class="btn reset">Reset</div><div class="btn ok">OK</div><div class="btn">Cancel</div><div class="btn">Apply</div></div>
</section>

<div class="activate"><div>Activate Windows</div><p>Go to Settings to activate Windows.</p></div>
</body>
</html>
```
FILE: styles.css
```css
* { box-sizing: border-box; }
body { margin: 0; width: 1366px; height: 768px; overflow: hidden; position: relative; display: flex; flex-direction: column; background: #f4f4f4; font: 12px/16px Inter, sans-serif; color: #333; white-space: nowrap; }
svg { display: block; flex: none; }
h1, h3, p { margin: 0; font-weight: normal; }
.defs { position: absolute; }
.titlebar { height: 23px; background: #fff; display: flex; align-items: center; font: 12px/16px "Open Sans", sans-serif; color: #888; }
.app-icon { margin: 0 4px 0 2px; }
.app-title { flex: 1; letter-spacing: -.36px; padding: 0 0 1px 1px; }
.menubar { height: 20px; background: #fff; padding: 3px 0 0 8px; display: flex; gap: 16px; font: 11.500px/16px "Open Sans", sans-serif; color: #999; letter-spacing: -.17px; }
.toolbar { height: 41px; display: flex; align-items: center; box-shadow: inset 0 1px #eee; }
.fit-select { width: 104px; height: 23px; margin-right: 1px; border: 1px solid #d4d4d4; border-radius: 2px; display: flex; align-items: center; justify-content: flex-end; padding-right: 5px; }
.fit-select span { border: 4px solid transparent; border-top-color: #ccc; border-bottom: 0; }
.tool-t { font: bold 13px "Liberation Serif", serif; }
.tool-t.small { font-size: 10px; }
.workspace { height: 593px; display: flex; }

.data-pane { width: 210px; background: #fff; border-right: 1px solid #ccc; border-top: 1px solid #ccc; display: flex; flex-direction: column; }
.pane-tabs { height: 26px; display: flex; font-size: 13px; line-height: 25px; }
.pane-tab { flex: 1; display: flex; justify-content: space-between; align-items: center; padding: 0 6px 0 12px; background: #fafafa; border: solid #ccc; border-width: 0 0 1px 1px; color: #333; letter-spacing: -.1px; }
.pane-tab.active { flex: none; width: 77px; background: #fff; border: 0; font-weight: 600; color: #000; padding-left: 18px; }
.source-row { height: 30px; display: flex; align-items: center; gap: 4px; padding-left: 20px; padding-bottom: 1px; border-bottom: 1px solid #ddd; letter-spacing: -.28px; color: #444; }
.search-row { display: flex; padding: 7px 0 0 8px; height: 34px; gap: 3px; }
.search-box { width: 129px; height: 23px; margin-top: 1px; border: 1px solid #bbb; border-radius: 1px; padding: 0 5px 0 6px; display: flex; align-items: center; justify-content: space-between; color: #999; }
.tables-title { font-weight: 600; font-size: 13px; padding: 5px 0 0 18px; height: 27px; color: #000; letter-spacing: -.1px; }
.field-area { flex: 1; display: flex; min-height: 0; overflow: hidden; }
.fields { width: 193px; margin-top: -1px; }
.field { height: 21px; display: flex; align-items: center; padding-left: 47px; color: #333; letter-spacing: -.14px; }
.field svg { width: 11px; height: 11px; margin: 0 12px 0 -23px; color: #3fa57c; }
.field.dim svg, .field b { color: #3b7f9f; }
.field b { font-size: 9px; margin: 0 5px 0 -26px; width: 21px; letter-spacing: -.2px; }
.fields hr { margin: 1px 7px 0 15px; border: 0; border-top: 1px solid #ddd; }
.scroll { width: 15px; background: #f0f0f0; display: flex; flex-direction: column; }
.scroll-thumb { height: 255px; background: #cbcbcb; }
.scroll-down { margin-top: auto; }

.cards { width: 154px; margin-left: 6px; display: flex; flex-direction: column; gap: 6px; }
.card { border: 1px solid #d0d0d0; background: #fafafa; padding: 7px 6px; }
.card h3 { font-size: 12px; line-height: 16px; color: #444; letter-spacing: -.05px; }
.pages { height: 62px; }
.filters { height: 78px; padding-left: 4px; padding-right: 4px; }
.filters h3 { padding-left: 2px; }
.marks { height: 241px; }
.pill { height: 20px; border-radius: 10px; background: #00b180; color: #fff; font-weight: 500; line-height: 19px; padding: 0 10.500px; letter-spacing: 0; }
.pill.blue { background: #4996b2; }
.pill.dark { background: #00976a; margin-top: 9px; }
.mark-type { height: 21px; margin-top: 12px; width: 140px; border: 1px solid #c8c8c8; background: #fff; display: flex; align-items: center; padding-left: 10px; gap: 6px; color: #555; letter-spacing: -.35px; }
.mark-type em { margin-left: auto; width: 18px; height: 19px; border-left: 1px solid #ccc; display: flex; align-items: center; justify-content: center; }
.mark-type em::after { content: ""; border: 4px solid transparent; border-top-color: #555; border-bottom: 0; }
.mark-grid { display: grid; grid-template-columns: 43px 42px 43px; gap: 6px; margin: 6px 0 9px; }
.mark-grid div { height: 42px; border: 1px solid #d0d0d0; display: flex; flex-direction: column; align-items: center; padding-top: 6px; gap: 3px; font-size: 11.500px; letter-spacing: -.15px; }
.mark-row { display: flex; align-items: center; gap: 3px; padding-left: 6px; height: 20px; margin-bottom: 3px; }
.mark-row .pill { width: 111px; letter-spacing: -.1px; }

.sheet { flex: 1; margin-left: 6px; display: flex; flex-direction: column; gap: 7px; }
.shelf { height: 27px; border: 1px solid #d0d0d0; background: #fafafa; display: flex; align-items: center; gap: 2px; }
.shelf-name { width: 125px; height: 25px; padding-left: 7px; border-right: 1px solid #ccc; display: flex; align-items: center; gap: 6px; color: #444; letter-spacing: -.05px; }
.shelf .pill { width: 148px; }
.view { width: 825px; height: 519px; background: #fff; border: 1px solid #d0d0d0; padding-left: 5px; display: flex; flex-direction: column; }
.view h1 { height: 55px; padding-top: 15px; width: 812px; text-align: center; font: 600 27px/34px "Open Sans", sans-serif; color: #333; letter-spacing: .65px; }
.map { position: relative; width: 813px; border: 1px solid #ddd; }
.credit { position: absolute; left: 1px; bottom: 0; background: #fafafa; padding: 1px 4px; font: 11px/15px "Liberation Sans", sans-serif; color: #444; }
.unknown { position: absolute; right: 6px; bottom: 4px; width: 85px; height: 20px; border-radius: 3px; background: #b0b0b0; color: #fff; font: bold 12px/19px "Open Sans", sans-serif; text-align: center; }

.sheet-tabs { height: 30px; display: flex; background: #e6e6e6; border-top: 1px solid #ccc; border-bottom: 1px solid #ccc; font-size: 12px; line-height: 29px; color: #666; }
.sheet-tabs > div { border-right: 1px solid #ccc; padding-left: 5px; overflow: hidden; letter-spacing: -.15px; }
.sheet-tabs .src { width: 132px; border-right-width: 2px; display: flex; gap: 5px; padding-left: 9px; letter-spacing: -.12px; }
.src svg { margin-top: 8px; }
.sheet-tabs .t40 { width: 189px; }
.sheet-tabs .current { width: 198px; background: #fafafa; color: #444; font-weight: 600; letter-spacing: .02px; line-height: 28px; }
.sheet-tabs .idx { width: 200px; }
.sheet-tabs .last { width: 151px; }
.sheet-tabs .add { width: 32px; padding: 7px 0 0 8px; }
.status { height: 21px; background: #eaeaea; display: flex; align-items: center; font-size: 11.500px; color: #222; padding-left: 3px; letter-spacing: -.2px; }
.status span { height: 20px; line-height: 20px; }
.s1 { width: 65px; }
.s2 { width: 106px; }
.s3 { letter-spacing: -.33px; }
.status svg { margin-left: auto; }

.taskbar { height: 40px; display: flex; background: linear-gradient(90deg, #22383f 0, #22363f 45%, #1c2c40 75%, #182447 100%); font-family: "Open Sans", sans-serif; color: #fff; }
.win-search { width: 288px; border: 1px solid #bbb; background: #f2f2f2; color: #333; display: flex; font-size: 15px; line-height: 38px; letter-spacing: -.52px; }
.scene { margin-left: auto; }
.weather { width: 168px; display: flex; font-size: 14px; line-height: 39px; letter-spacing: -.4px; }
.temp { margin: 0 9px 0 5px; }
.clock { width: 72px; margin-left: 1px; margin-right: -1px; display: flex; flex-direction: column; align-items: center; font-size: 12px; line-height: 18px; padding-top: 2px; letter-spacing: -.4px; }
.badge { font: 12px "Open Sans", sans-serif; }

.showme { position: absolute; left: 1158px; top: 48px; width: 204px; height: 592px; filter: drop-shadow(2px 2px 2px #999); display: flex; flex-direction: column; align-items: flex-end; }
.showme-tab { width: 111px; height: 37px; background: #fafafa; border: 1px solid #d8d8d8; border-bottom: 0; display: flex; align-items: center; gap: 5px; padding: 0 0 7px 11px; font-size: 13px; color: #222; z-index: 1; }
.showme-body { width: 204px; flex: 1; margin-top: -1px; border: 1px solid #d8d8d8; background: #fafafa; padding: 14px 0 0 13px; }
.thumbs { display: grid; grid-template-columns: repeat(3, 56px); gap: 4px; margin-bottom: 18px; }
.thumbs svg { width: 56px; height: 42px; background: #fff; outline: 1px solid #ddd; outline-offset: -1px; }
.thumbs .selected { outline: 2px solid #dc6b38; outline-offset: -2px; }
.tiny { font: 6px "Liberation Serif", serif; }
.hint { margin: 0 0 7px 2px; color: #333; }
.hint b { font-weight: 600; color: #111; letter-spacing: -.3px; }
.need { display: flex; height: 20px; margin: 0 0 8px 2px; gap: 3px; align-items: center; color: #333; letter-spacing: -.1px; }
.need span { padding-top: 3px; }
.need .geo { margin-right: 4px; }
.need svg { margin-right: 2px; }
.need .pill { letter-spacing: .1px; }
.showme p { margin: 12px 0 0 2px; color: #888; letter-spacing: -.2px; }

.dialog { position: absolute; left: 429px; top: 181px; width: 508px; height: 358px; border: 1px solid #666; background: #f0f0f0; box-shadow: 0 4px 16px rgba(0,0,0,.4); font: 11px/14px "Noto Sans", sans-serif; color: #000; padding: 0 11px; letter-spacing: -.15px; }
.dialog header { height: 30px; margin: 0 -11px 11px; padding: 0 9px 2px 8px; background: #fff; display: flex; align-items: center; justify-content: space-between; font: 12px "Open Sans", sans-serif; letter-spacing: -.3px; }
.modes { display: grid; grid-template-columns: 114px 113px 114px 113px; gap: 10px; }
.mode { height: 60px; border: 1px solid #a0a0a0; background: #ddd; display: flex; flex-direction: column; align-items: center; padding-top: 11px; gap: 3px; }
.mode.on { background: #bfddf5; border-color: #0078d7; }
.range { margin: 6px 0 0; width: 484px; height: 208px; border: 1px solid #dcdcdc; padding: 0 0 0 23px; }
.range legend { margin-left: -18px; padding: 0 2px; letter-spacing: -.25px; }
.inputs { display: flex; gap: 146px; margin-top: 53px; }
.input { width: 146px; height: 22px; border: 1px solid #707070; background: #fff; padding: 4px 2px; }
.slider { margin-top: 8px; }
.limits { display: flex; justify-content: space-between; width: 438px; margin-top: 8px; }
.show-row { display: flex; align-items: center; margin: 52px 0 0 -16px; width: 470px; }
.combo { width: 131px; height: 23px; margin: 0 auto 0 7px; border: 1px solid #a0a0a0; background: #e2e2e2; display: flex; align-items: center; justify-content: space-between; padding: 0 3px 0 2px; letter-spacing: -.27px; }
.check { width: 13px; height: 13px; border: 1px solid #333; background: #fff; margin-right: 4px; }
.nulls { letter-spacing: -.46px; }
.buttons { display: flex; gap: 8px; margin: 8px 1px 0; }
.btn { width: 73px; height: 21px; border: 1px solid #adadad; background: #e1e1e1; display: flex; align-items: center; justify-content: center; padding-right: 2px; }
.btn.reset { margin-right: auto; }
.btn.ok { border: 2px solid #0078d7; }
.activate { position: absolute; left: 1073px; top: 649px; color: rgba(145,145,145,.62); font: 19px/25px "Open Sans", sans-serif; letter-spacing: 0; pointer-events: none; }
.activate p { font-size: 14.500px; line-height: 21px; letter-spacing: 0; }
```
